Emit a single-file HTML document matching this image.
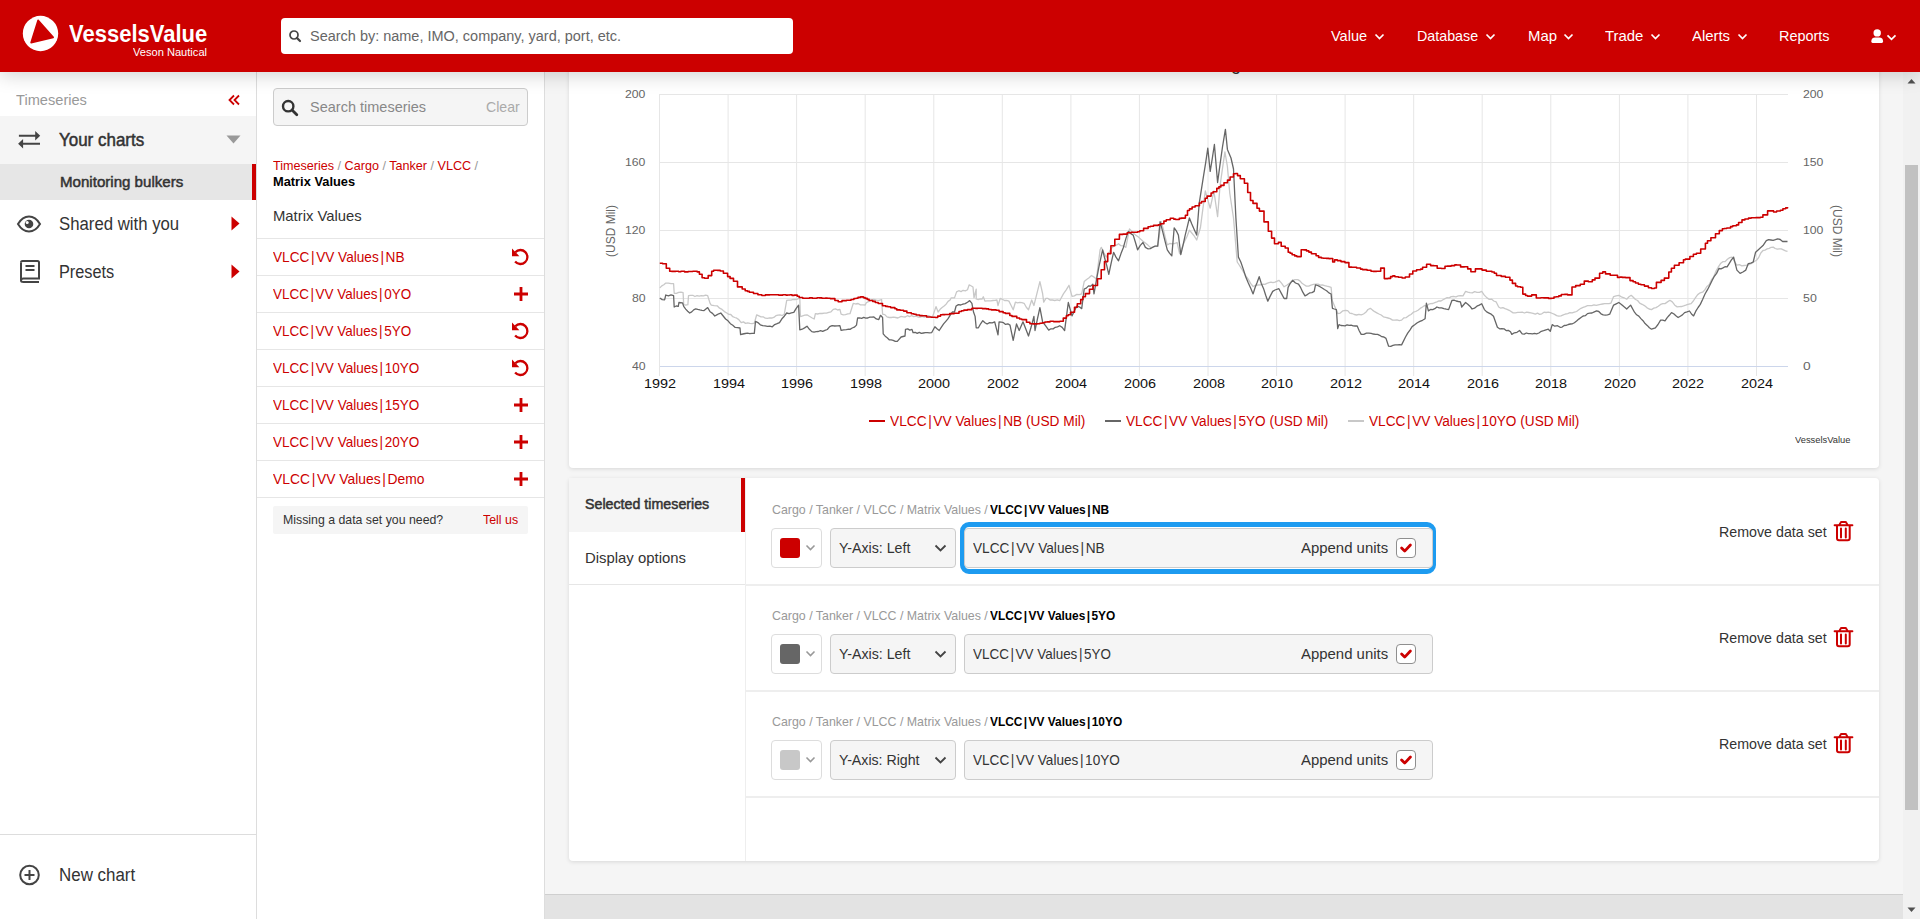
<!DOCTYPE html>
<html><head><meta charset="utf-8"><title>VesselsValue Timeseries</title>
<style>
html,body{margin:0;padding:0;width:1920px;height:919px;overflow:hidden;background:#fff;font-family:"Liberation Sans", sans-serif;}
.t{position:absolute;line-height:1;white-space:nowrap;transform-origin:0 50%;}
.r{position:absolute;}
</style></head><body>
<div class="r" style="left:545px;top:72px;width:1375px;height:847px;background:#f5f5f5"></div>
<div class="r" style="left:0px;top:72px;width:256px;height:847px;background:#fff;border-right:1px solid #ddd"></div>
<div class="r" style="left:257px;top:72px;width:287px;height:847px;background:#fff;border-right:1px solid #ddd"></div>
<div class="r" style="left:545px;top:894px;width:1358px;height:25px;background:#e3e3e3;border-top:1px solid #cfcfcf;box-sizing:border-box"></div>
<div class="r" style="left:1903px;top:72px;width:17px;height:847px;background:#f1f1f1"></div>
<div class="r" style="left:1905px;top:165px;width:13px;height:645px;background:#c1c1c1"></div>
<svg class="r" style="left:1903px;top:72px" width="17" height="847"><path d="M4.5 11.5 L8.5 7 L12.5 11.5Z" fill="#505050"/><path d="M4.5 835.5 L8.5 840 L12.5 835.5Z" fill="#505050"/></svg>
<div id="sb_ts" class="t" style="left:16.0px;top:93.1px;font-size:14px;color:#999;font-weight:400;transform:scaleX(1.0441);">Timeseries</div>
<svg class="r" style="left:226px;top:92px" width="16" height="16" viewBox="0 0 16 16"><path d="M8 3.5 L3.5 8 L8 12.5 M13 3.5 L8.5 8 L13 12.5" stroke="#cc0000" stroke-width="1.8" fill="none"/></svg>
<div class="r" style="left:0px;top:116px;width:256px;height:48px;background:#f5f5f5"></div>
<svg class="r" style="left:17px;top:129px" width="26" height="22" viewBox="0 0 26 22"><path d="M1.9 6.7 H19.5 M4.5 14.7 H23" stroke="#444" stroke-width="1.9"/><path d="M23.2 6.7 L18.2 1.9 V11.5Z M1.1 14.7 L6.1 9.9 V19.5Z" fill="#444"/></svg>
<div id="sb_yc" class="t" style="left:59.4px;top:130.8px;font-size:18px;color:#333;font-weight:400;-webkit-text-stroke:0.5px currentColor;transform:scaleX(0.9422);">Your charts</div>
<svg class="r" style="left:226px;top:135px" width="15" height="9"><path d="M0.5 0.5 H14.5 L7.5 8.5Z" fill="#999"/></svg>
<div class="r" style="left:0px;top:164px;width:256px;height:36px;background:#e6e6e6"></div>
<div class="r" style="left:252px;top:164px;width:4px;height:36px;background:#cc0000"></div>
<div id="sb_mb" class="t" style="left:60.0px;top:174.3px;font-size:15px;color:#333;font-weight:400;-webkit-text-stroke:0.5px currentColor;transform:scaleX(1.0057);">Monitoring bulkers</div>
<svg class="r" style="left:16px;top:215px" width="27" height="18" viewBox="0 0 27 18"><path d="M2 9 C5.2 3.6 8.8 1.5 13 1.5 C17.2 1.5 20.8 3.6 24 9 C20.8 14.4 17.2 16.5 13 16.5 C8.8 16.5 5.2 14.4 2 9Z" stroke="#444" stroke-width="2" fill="none"/><circle cx="13" cy="9" r="4.3" fill="#444"/><circle cx="11.2" cy="7.4" r="1.5" fill="#fff"/></svg>
<div id="sb_sw" class="t" style="left:59.4px;top:215.5px;font-size:17.6px;color:#333;font-weight:400;transform:scaleX(0.9524);">Shared with you</div>
<svg class="r" style="left:231px;top:216px" width="9" height="15"><path d="M0.5 0.5 L8.5 7.5 L0.5 14.5Z" fill="#cc0000"/></svg>
<svg class="r" style="left:18px;top:259px" width="24" height="25" viewBox="0 0 24 25"><path d="M3 3.5 Q3 2 4.5 2 H19.5 Q21 2 21 3.5 V19.5 H5.5 Q3 19.5 3 21.5 Q3 23 5.5 23 H21" stroke="#444" stroke-width="2" fill="none"/><path d="M3 3.5 V21.5" stroke="#444" stroke-width="2"/><path d="M7.5 7 H16.5 M7.5 11 H16.5" stroke="#444" stroke-width="2"/></svg>
<div id="sb_pr" class="t" style="left:59.4px;top:263.9px;font-size:17.6px;color:#333;font-weight:400;transform:scaleX(0.9267);">Presets</div>
<svg class="r" style="left:231px;top:264px" width="9" height="15"><path d="M0.5 0.5 L8.5 7.5 L0.5 14.5Z" fill="#cc0000"/></svg>
<div class="r" style="left:0px;top:834px;width:256px;height:1px;background:#ddd"></div>
<svg class="r" style="left:18px;top:864px" width="23" height="22" viewBox="0 0 23 22"><circle cx="11.5" cy="11" r="9.3" stroke="#444" stroke-width="2" fill="none"/><path d="M11.5 6 V16 M6.5 11 H16.5" stroke="#444" stroke-width="2"/></svg>
<div id="sb_nc" class="t" style="left:59.4px;top:866.7px;font-size:17.6px;color:#333;font-weight:400;transform:scaleX(0.9620);">New chart</div>
<div class="r" style="left:273px;top:88px;width:255px;height:38px;background:#f5f5f5;border:1px solid #ccc;border-radius:4px;box-sizing:border-box"></div>
<svg class="r" style="left:281px;top:99px" width="18" height="18" viewBox="0 0 18 18"><circle cx="7.2" cy="7.2" r="5.2" stroke="#333" stroke-width="2.4" fill="none"/><path d="M11 11 L15.8 15.8" stroke="#333" stroke-width="2.8" stroke-linecap="round"/></svg>
<div id="m_st" class="t" style="left:310.4px;top:99.8px;font-size:14.4px;color:#888;font-weight:400;transform:scaleX(1.0078);">Search timeseries</div>
<div id="m_cl" class="t" style="left:485.6px;top:99.8px;font-size:14.4px;color:#aaa;font-weight:400;transform:scaleX(0.9824);">Clear</div>
<div id="m_bc" class="t" style="left:273.4px;top:159.7px;font-size:12.2px;color:#cc0000;font-weight:400;transform:scaleX(1.0332);">Timeseries <span style="color:#999">/</span> Cargo <span style="color:#999">/</span> Tanker <span style="color:#999">/</span> VLCC <span style="color:#999">/</span></div>
<div id="m_mvb" class="t" style="left:273.4px;top:176.3px;font-size:12.6px;color:#000;font-weight:700;transform:scaleX(1.0198);">Matrix Values</div>
<div id="m_mv" class="t" style="left:273.4px;top:208.5px;font-size:14.4px;color:#333;font-weight:400;transform:scaleX(1.0302);">Matrix Values</div>
<div class="r" style="left:257px;top:238px;width:287px;height:1px;background:#e6e6e6"></div>
<div id="m_it0" class="t" style="left:273.4px;top:249.8px;font-size:14.4px;color:#cc0000;font-weight:400;transform:scaleX(0.9468);">VLCC<span style="margin:0 0.12em">|</span>VV Values<span style="margin:0 0.12em">|</span>NB</div>
<div class="r" style="left:257px;top:275px;width:287px;height:1px;background:#e6e6e6"></div>
<svg class="r" style="left:510px;top:247px" width="20" height="20" viewBox="0 0 20 20"><path d="M5.3 5.2 A7 7 0 1 1 5.1 14.6" stroke="#cc0000" stroke-width="2.3" fill="none"/><path d="M2 1.6 V9.2 H9.4Z" fill="#cc0000"/></svg>
<div id="m_it1" class="t" style="left:273.4px;top:286.8px;font-size:14.4px;color:#cc0000;font-weight:400;transform:scaleX(0.9351);">VLCC<span style="margin:0 0.12em">|</span>VV Values<span style="margin:0 0.12em">|</span>0YO</div>
<div class="r" style="left:257px;top:312px;width:287px;height:1px;background:#e6e6e6"></div>
<svg class="r" style="left:514px;top:287px" width="14" height="14" viewBox="0 0 14 14"><path d="M7 0 V14 M0 7 H14" stroke="#cc0000" stroke-width="2.8"/></svg>
<div id="m_it2" class="t" style="left:273.4px;top:323.8px;font-size:14.4px;color:#cc0000;font-weight:400;transform:scaleX(0.9351);">VLCC<span style="margin:0 0.12em">|</span>VV Values<span style="margin:0 0.12em">|</span>5YO</div>
<div class="r" style="left:257px;top:349px;width:287px;height:1px;background:#e6e6e6"></div>
<svg class="r" style="left:510px;top:321px" width="20" height="20" viewBox="0 0 20 20"><path d="M5.3 5.2 A7 7 0 1 1 5.1 14.6" stroke="#cc0000" stroke-width="2.3" fill="none"/><path d="M2 1.6 V9.2 H9.4Z" fill="#cc0000"/></svg>
<div id="m_it3" class="t" style="left:273.4px;top:360.8px;font-size:14.4px;color:#cc0000;font-weight:400;transform:scaleX(0.9397);">VLCC<span style="margin:0 0.12em">|</span>VV Values<span style="margin:0 0.12em">|</span>10YO</div>
<div class="r" style="left:257px;top:386px;width:287px;height:1px;background:#e6e6e6"></div>
<svg class="r" style="left:510px;top:358px" width="20" height="20" viewBox="0 0 20 20"><path d="M5.3 5.2 A7 7 0 1 1 5.1 14.6" stroke="#cc0000" stroke-width="2.3" fill="none"/><path d="M2 1.6 V9.2 H9.4Z" fill="#cc0000"/></svg>
<div id="m_it4" class="t" style="left:273.4px;top:397.8px;font-size:14.4px;color:#cc0000;font-weight:400;transform:scaleX(0.9397);">VLCC<span style="margin:0 0.12em">|</span>VV Values<span style="margin:0 0.12em">|</span>15YO</div>
<div class="r" style="left:257px;top:423px;width:287px;height:1px;background:#e6e6e6"></div>
<svg class="r" style="left:514px;top:398px" width="14" height="14" viewBox="0 0 14 14"><path d="M7 0 V14 M0 7 H14" stroke="#cc0000" stroke-width="2.8"/></svg>
<div id="m_it5" class="t" style="left:273.4px;top:434.8px;font-size:14.4px;color:#cc0000;font-weight:400;transform:scaleX(0.9397);">VLCC<span style="margin:0 0.12em">|</span>VV Values<span style="margin:0 0.12em">|</span>20YO</div>
<div class="r" style="left:257px;top:460px;width:287px;height:1px;background:#e6e6e6"></div>
<svg class="r" style="left:514px;top:435px" width="14" height="14" viewBox="0 0 14 14"><path d="M7 0 V14 M0 7 H14" stroke="#cc0000" stroke-width="2.8"/></svg>
<div id="m_it6" class="t" style="left:273.4px;top:471.8px;font-size:14.4px;color:#cc0000;font-weight:400;transform:scaleX(0.9631);">VLCC<span style="margin:0 0.12em">|</span>VV Values<span style="margin:0 0.12em">|</span>Demo</div>
<div class="r" style="left:257px;top:497px;width:287px;height:1px;background:#e6e6e6"></div>
<svg class="r" style="left:514px;top:472px" width="14" height="14" viewBox="0 0 14 14"><path d="M7 0 V14 M0 7 H14" stroke="#cc0000" stroke-width="2.8"/></svg>
<div class="r" style="left:273px;top:506px;width:255px;height:28px;background:#f5f5f5;border-radius:2px"></div>
<div id="m_ms" class="t" style="left:283.4px;top:513.7px;font-size:12.6px;color:#333;font-weight:400;transform:scaleX(0.9780);">Missing a data set you need?</div>
<div id="m_tu" class="t" style="left:483.0px;top:513.7px;font-size:12.6px;color:#cc0000;font-weight:400;transform:scaleX(0.9833);">Tell us</div>
<div class="r" style="left:569px;top:50px;width:1310px;height:418px;background:#fff;border-radius:4px;box-shadow:0 1px 4px rgba(0,0,0,.12)"></div>
<div class="t" style="left:1231px;top:55.4px;font-size:18px;color:#333">g</div>
<svg class="r" style="left:545px;top:72px" width="1358" height="400" viewBox="545 72 1358 400">
<path d="M660 94.5 H1788" stroke="#e6e6e6" stroke-width="1"/>
<path d="M660 162.5 H1788" stroke="#e6e6e6" stroke-width="1"/>
<path d="M660 230.5 H1788" stroke="#e6e6e6" stroke-width="1"/>
<path d="M660 298.5 H1788" stroke="#e6e6e6" stroke-width="1"/>
<path d="M659.5 94 V376" stroke="#e6e6e6" stroke-width="1"/>
<path d="M728.1 94 V376" stroke="#e6e6e6" stroke-width="1"/>
<path d="M796.6 94 V376" stroke="#e6e6e6" stroke-width="1"/>
<path d="M865.2 94 V376" stroke="#e6e6e6" stroke-width="1"/>
<path d="M933.8 94 V376" stroke="#e6e6e6" stroke-width="1"/>
<path d="M1002.3 94 V376" stroke="#e6e6e6" stroke-width="1"/>
<path d="M1070.9 94 V376" stroke="#e6e6e6" stroke-width="1"/>
<path d="M1139.4 94 V376" stroke="#e6e6e6" stroke-width="1"/>
<path d="M1208.0 94 V376" stroke="#e6e6e6" stroke-width="1"/>
<path d="M1276.6 94 V376" stroke="#e6e6e6" stroke-width="1"/>
<path d="M1345.1 94 V376" stroke="#e6e6e6" stroke-width="1"/>
<path d="M1413.7 94 V376" stroke="#e6e6e6" stroke-width="1"/>
<path d="M1482.2 94 V376" stroke="#e6e6e6" stroke-width="1"/>
<path d="M1550.8 94 V376" stroke="#e6e6e6" stroke-width="1"/>
<path d="M1619.4 94 V376" stroke="#e6e6e6" stroke-width="1"/>
<path d="M1687.9 94 V376" stroke="#e6e6e6" stroke-width="1"/>
<path d="M1756.5 94 V376" stroke="#e6e6e6" stroke-width="1"/>
<path d="M660 366.5 H1788" stroke="#ccd6eb" stroke-width="1"/>
<path d="M659.8 287.9 L661.8 285.9 L663.8 284.8 L665.8 283.1 L668.4 283.1 L671.0 283.7 L673.6 283.7 L674.2 293.3 L676.4 293.4 L678.7 292.3 L680.9 292.1 L683.1 292.7 L683.7 304.6 L685.8 305.1 L687.9 304.6 L688.5 295.7 L690.6 295.3 L692.8 295.3 L694.9 296.5 L697.0 295.7 L699.2 296.2 L701.3 295.7 L703.4 295.9 L705.6 295.1 L707.7 295.7 L710.1 303.4 L711.3 305.2 L714.2 305.7 L717.2 305.8 L719.6 308.2 L722.0 309.4 L724.4 311.6 L726.8 313.0 L728.8 314.4 L730.8 314.5 L732.8 316.7 L734.8 317.5 L736.8 318.2 L738.8 319.6 L741.2 322.6 L743.4 321.9 L745.6 323.4 L747.8 322.9 L749.9 323.4 L752.1 323.7 L754.3 323.2 L756.7 314.8 L758.9 315.9 L761.0 316.9 L763.2 316.8 L765.3 318.2 L767.5 318.4 L769.6 317.8 L771.7 318.0 L773.8 317.4 L775.9 315.7 L778.0 315.2 L780.1 314.8 L782.2 315.5 L784.3 314.2 L786.7 300.4 L788.8 300.1 L791.0 300.1 L793.1 299.4 L795.3 299.5 L797.4 299.2 L799.8 298.0 L800.4 316.6 L802.6 315.8 L804.8 315.2 L807.0 314.8 L809.4 316.3 L811.8 317.7 L814.2 319.0 L815.4 313.6 L817.6 314.0 L819.9 313.4 L822.1 313.5 L824.3 313.1 L826.5 313.1 L828.8 312.3 L831.0 311.8 L833.3 309.4 L835.5 308.9 L837.7 310.0 L839.9 309.4 L841.1 314.2 L843.3 314.8 L845.5 314.6 L847.8 313.9 L850.0 313.7 L853.3 303.3 L855.7 304.0 L858.1 303.5 L860.4 304.9 L862.8 304.8 L865.2 305.0 L866.3 302.8 L868.8 301.4 L871.4 299.9 L873.9 299.5 L876.5 300.1 L879.0 300.3 L881.6 299.5 L882.6 314.2 L884.8 314.6 L887.0 316.9 L889.2 317.5 L891.4 317.5 L893.5 317.2 L895.7 317.5 L897.9 318.0 L901.1 316.4 L903.2 316.8 L905.3 317.0 L907.4 315.7 L909.5 316.6 L911.6 315.7 L913.7 316.7 L915.8 316.1 L918.0 317.0 L920.1 317.2 L922.2 316.4 L924.3 317.2 L926.4 316.1 L928.5 315.7 L930.6 316.6 L932.7 316.4 L936.0 306.6 L938.1 312.0 L940.1 309.3 L942.1 307.5 L944.1 305.9 L946.1 304.2 L948.1 301.4 L950.1 300.0 L951.2 297.9 L954.5 297.9 L956.6 291.9 L958.8 290.7 L961.0 291.6 L963.1 290.3 L965.3 290.9 L967.5 289.7 L969.2 284.8 L973.0 287.0 L974.0 297.9 L976.2 289.2 L976.2 299.0 L978.2 299.6 L980.2 298.8 L982.2 299.0 L983.3 296.8 L984.9 301.1 L986.9 300.9 L988.9 300.8 L990.9 300.8 L992.9 300.5 L994.9 300.3 L996.9 300.0 L998.0 305.5 L1000.2 298.4 L1002.4 299.3 L1004.5 300.5 L1006.7 300.4 L1008.9 301.1 L1011.0 305.3 L1013.2 309.8 L1015.4 302.2 L1017.6 302.8 L1019.8 302.3 L1021.9 302.7 L1024.1 303.3 L1026.3 307.3 L1028.5 309.8 L1031.7 300.0 L1033.9 305.5 L1035.9 297.6 L1037.9 289.6 L1039.9 281.6 L1042.6 293.5 L1043.7 302.2 L1045.9 298.4 L1048.0 298.4 L1050.0 300.0 L1052.4 300.0 L1054.8 300.5 L1057.3 299.8 L1059.7 300.7 L1063.4 293.9 L1066.2 289.8 L1069.0 285.3 L1072.0 296.3 L1074.4 295.9 L1076.8 294.4 L1079.3 294.7 L1081.7 293.9 L1084.2 281.6 L1086.6 279.5 L1089.1 277.8 L1091.5 275.5 L1094.0 277.1 L1096.4 279.2 L1100.1 249.8 L1101.3 247.4 L1103.8 252.6 L1106.2 257.1 L1108.2 254.2 L1110.3 249.9 L1112.3 247.4 L1114.4 245.5 L1116.4 245.2 L1118.5 243.7 L1120.9 245.7 L1123.4 245.8 L1125.8 247.4 L1129.5 229.0 L1131.5 231.0 L1133.6 233.2 L1135.6 235.1 L1138.1 236.8 L1140.5 238.9 L1143.0 241.2 L1145.4 243.0 L1147.9 245.1 L1150.3 247.4 L1152.8 247.1 L1155.2 246.2 L1157.7 246.1 L1161.3 221.6 L1163.3 229.2 L1165.3 237.6 L1167.3 244.9 L1169.8 243.5 L1172.2 243.8 L1174.6 243.5 L1177.1 242.5 L1179.6 253.5 L1182.0 247.4 L1184.5 241.4 L1187.0 236.5 L1189.4 230.2 L1191.8 233.0 L1194.3 236.2 L1196.7 240.0 L1200.4 227.8 L1202.8 209.3 L1205.3 191.0 L1207.8 199.9 L1210.2 208.2 L1213.9 191.0 L1217.6 216.7 L1220.0 186.1 L1222.5 168.3 L1224.9 151.8 L1227.4 166.5 L1229.8 193.5 L1233.5 218.0 L1237.2 262.0 L1239.2 265.0 L1241.3 268.3 L1243.3 271.8 L1245.8 276.0 L1248.2 279.1 L1250.6 283.4 L1253.1 286.5 L1255.5 285.4 L1258.0 285.0 L1260.5 284.9 L1262.9 284.1 L1264.9 284.4 L1266.9 283.4 L1269.0 282.7 L1271.0 282.2 L1273.0 282.6 L1275.0 282.2 L1278.9 280.3 L1281.5 283.1 L1284.1 286.8 L1286.7 285.3 L1289.4 283.4 L1292.0 280.9 L1294.9 279.7 L1297.8 279.6 L1299.9 280.9 L1302.0 283.3 L1304.2 284.7 L1306.3 286.1 L1308.7 286.2 L1311.0 285.1 L1313.4 284.4 L1315.7 284.2 L1318.1 284.2 L1320.3 285.2 L1322.4 284.9 L1324.6 285.6 L1326.8 286.2 L1328.9 286.7 L1331.1 287.4 L1332.4 301.1 L1335.1 307.2 L1337.7 313.5 L1340.3 313.1 L1342.9 310.8 L1345.5 310.3 L1347.7 310.6 L1349.8 313.1 L1352.0 313.5 L1354.3 314.5 L1356.6 315.0 L1358.9 314.4 L1361.2 314.9 L1363.5 314.0 L1365.8 312.3 L1368.0 309.5 L1370.3 308.3 L1372.5 310.1 L1374.7 311.7 L1376.8 312.8 L1379.0 314.0 L1381.2 315.0 L1383.4 316.8 L1385.7 317.4 L1388.0 318.0 L1390.2 318.6 L1392.5 320.1 L1394.8 320.2 L1397.0 319.8 L1399.3 320.6 L1401.6 320.1 L1404.0 317.8 L1406.3 317.6 L1408.7 315.7 L1411.0 314.5 L1413.4 312.2 L1415.7 311.5 L1418.0 310.2 L1420.2 308.4 L1422.5 307.0 L1424.6 305.5 L1426.6 305.9 L1428.7 304.2 L1430.7 303.7 L1432.8 303.5 L1434.8 302.6 L1436.9 301.8 L1438.9 300.9 L1441.0 301.0 L1443.0 299.8 L1445.1 298.6 L1447.1 297.7 L1449.2 297.9 L1451.2 296.6 L1453.6 296.4 L1455.9 296.8 L1458.3 295.9 L1460.6 295.6 L1463.0 295.9 L1465.6 291.4 L1467.8 292.1 L1470.0 292.7 L1472.3 292.9 L1474.7 291.7 L1477.0 292.4 L1479.4 292.3 L1481.7 291.4 L1484.3 295.1 L1487.0 297.9 L1489.3 299.4 L1491.5 299.1 L1493.8 301.0 L1496.1 301.8 L1498.7 307.0 L1500.8 308.2 L1502.9 307.6 L1505.0 308.6 L1507.1 309.3 L1509.2 310.3 L1513.1 312.9 L1515.4 312.8 L1517.7 312.4 L1519.9 312.3 L1522.2 312.2 L1524.4 313.0 L1526.6 312.1 L1528.8 312.5 L1530.9 312.9 L1533.1 313.3 L1535.3 314.2 L1537.5 313.2 L1539.6 314.3 L1541.8 313.8 L1544.0 312.2 L1546.1 312.5 L1548.3 312.2 L1550.4 312.7 L1552.5 313.5 L1554.6 314.4 L1556.7 315.6 L1558.8 316.2 L1561.0 315.8 L1563.3 314.8 L1565.5 314.0 L1567.7 313.6 L1569.9 312.7 L1572.2 312.9 L1574.4 312.2 L1576.6 311.5 L1578.8 309.8 L1581.0 308.3 L1583.1 307.4 L1585.3 306.6 L1587.5 305.7 L1589.7 305.7 L1591.8 305.7 L1594.0 304.9 L1596.2 305.3 L1598.3 304.8 L1600.5 304.4 L1602.6 304.0 L1604.7 303.7 L1606.8 303.6 L1608.9 303.7 L1611.0 303.1 L1613.6 296.6 L1616.2 295.8 L1618.8 295.3 L1621.4 296.9 L1624.1 297.8 L1626.7 299.2 L1629.0 296.8 L1631.2 295.3 L1633.3 297.3 L1635.5 299.5 L1637.6 300.5 L1639.7 303.1 L1642.1 304.3 L1644.4 305.6 L1646.8 307.6 L1649.1 309.0 L1651.5 309.6 L1653.8 308.1 L1656.0 307.6 L1658.3 306.2 L1660.6 304.4 L1662.8 303.6 L1665.0 303.6 L1667.5 301.9 L1669.9 300.3 L1672.3 301.9 L1674.8 305.2 L1677.2 306.9 L1679.3 306.7 L1681.5 306.5 L1683.6 305.9 L1685.8 305.2 L1687.9 304.4 L1691.1 303.6 L1693.3 301.0 L1695.5 297.7 L1697.7 294.6 L1700.2 292.8 L1702.6 292.2 L1704.8 289.9 L1706.9 286.5 L1709.1 284.8 L1711.4 280.0 L1713.7 276.8 L1715.9 271.4 L1718.2 267.2 L1720.5 263.6 L1722.8 261.7 L1725.1 261.6 L1727.4 259.2 L1729.7 257.6 L1732.0 257.1 L1734.5 261.7 L1736.9 265.2 L1739.4 264.6 L1741.8 265.8 L1744.2 265.5 L1746.7 265.2 L1749.2 264.5 L1751.6 263.5 L1754.0 261.7 L1756.5 260.3 L1758.7 257.5 L1760.8 253.0 L1763.0 250.5 L1765.0 250.1 L1767.1 248.9 L1769.2 248.4 L1771.2 247.3 L1773.2 247.1 L1775.2 248.5 L1777.3 249.2 L1779.3 248.9 L1781.3 248.8 L1783.4 249.8 L1785.5 250.8 L1787.5 251.3" stroke="#c8c8c8" stroke-width="1.3" fill="none" stroke-linejoin="round"/>
<path d="M659.8 298.0 L662.2 299.6 L664.6 299.8 L665.8 295.0 L668.4 295.9 L671.0 294.8 L673.6 295.7 L674.2 307.0 L676.2 306.0 L678.3 306.4 L678.9 302.5 L682.5 302.8 L683.7 306.4 L685.7 309.1 L687.7 311.2 L689.7 313.0 L691.7 311.9 L693.7 309.9 L695.7 308.8 L697.8 309.4 L699.9 309.9 L702.0 310.3 L704.1 310.6 L707.7 307.6 L710.1 311.8 L712.5 313.4 L714.8 316.0 L716.8 314.9 L718.8 313.8 L720.8 313.0 L723.2 316.0 L725.6 319.0 L728.0 320.8 L730.4 323.7 L732.8 325.3 L735.2 327.4 L737.6 327.6 L740.0 328.0 L740.6 334.6 L742.9 334.0 L745.2 333.5 L747.5 333.2 L749.7 333.7 L752.0 333.3 L754.3 333.4 L755.5 321.4 L757.9 322.6 L760.3 324.8 L762.7 325.6 L765.1 325.9 L767.5 326.3 L769.9 326.1 L772.3 326.8 L774.7 324.6 L777.1 323.7 L779.5 322.6 L781.9 318.8 L784.3 316.2 L786.7 313.0 L789.1 313.6 L791.4 312.9 L793.8 312.4 L796.2 308.3 L798.6 305.2 L799.8 329.8 L802.2 329.2 L804.6 327.9 L807.0 326.2 L809.4 329.3 L811.8 331.6 L814.0 332.1 L816.2 331.6 L818.3 331.5 L820.5 330.6 L822.7 331.4 L824.9 330.4 L827.3 329.5 L829.7 326.7 L832.1 325.6 L834.7 326.0 L837.3 325.9 L839.9 325.6 L841.1 330.4 L843.7 329.9 L846.3 329.6 L848.9 329.2 L850.0 329.4 L852.2 328.0 L854.3 327.2 L856.5 325.1 L857.6 318.0 L859.6 317.9 L861.7 318.3 L863.7 317.4 L865.8 318.1 L867.8 318.0 L869.8 317.1 L871.9 317.1 L873.9 316.9 L876.3 318.9 L878.8 319.6 L880.5 315.3 L882.6 317.5 L883.2 333.8 L885.2 336.2 L887.2 337.8 L889.2 339.8 L891.2 339.8 L893.2 340.3 L895.3 341.3 L897.3 341.4 L901.1 337.0 L905.0 336.0 L905.5 329.4 L907.7 328.9 L909.8 330.1 L912.0 329.4 L913.1 332.7 L915.2 332.3 L917.2 333.4 L919.3 332.4 L921.3 333.4 L923.4 333.0 L925.4 332.7 L927.5 332.7 L929.5 332.9 L931.6 332.7 L934.9 326.7 L937.0 328.7 L939.2 330.5 L941.4 327.1 L943.6 323.9 L945.8 321.3 L947.9 318.9 L950.1 315.3 L952.3 312.0 L954.5 312.0 L956.1 306.0 L958.4 304.6 L960.7 305.0 L962.9 304.1 L965.2 303.6 L967.5 302.2 L969.7 300.6 L971.9 303.3 L973.5 312.0 L975.1 316.4 L976.2 327.8 L978.4 327.8 L980.6 323.8 L982.8 320.7 L985.0 322.7 L987.1 324.0 L989.6 322.6 L992.2 322.8 L994.7 321.8 L998.0 334.9 L999.1 321.8 L1001.3 322.1 L1003.5 322.7 L1005.6 324.4 L1007.8 323.8 L1010.0 325.1 L1013.2 340.3 L1016.5 324.0 L1019.2 330.5 L1023.0 321.8 L1025.8 328.9 L1028.5 336.0 L1031.2 326.8 L1033.9 316.4 L1035.0 330.5 L1037.5 318.7 L1039.9 307.7 L1042.6 321.8 L1045.9 326.2 L1048.7 330.1 L1050.9 328.8 L1053.1 328.9 L1055.3 327.3 L1057.5 326.9 L1059.7 325.7 L1062.2 327.4 L1064.6 330.6 L1068.3 302.5 L1072.0 315.9 L1074.4 310.8 L1076.8 306.1 L1079.2 306.8 L1081.7 308.6 L1084.2 289.0 L1086.3 288.1 L1088.5 285.9 L1090.7 286.1 L1092.8 284.1 L1094.0 293.9 L1096.5 279.6 L1098.9 266.9 L1102.6 249.8 L1104.7 258.3 L1106.7 265.4 L1108.8 274.3 L1111.2 262.9 L1113.6 252.3 L1116.0 257.1 L1118.5 260.8 L1121.0 253.6 L1123.4 247.4 L1125.8 238.9 L1128.3 231.4 L1130.8 233.6 L1133.2 235.1 L1135.4 242.3 L1137.6 249.8 L1140.3 245.4 L1143.0 242.5 L1145.4 247.4 L1147.8 248.8 L1150.3 248.6 L1152.8 247.2 L1155.2 246.2 L1157.7 246.1 L1160.1 221.6 L1162.5 230.8 L1164.9 240.6 L1167.3 249.8 L1169.5 253.2 L1171.8 255.9 L1174.2 227.8 L1176.3 230.8 L1178.4 235.1 L1180.8 254.7 L1183.0 245.3 L1185.1 235.6 L1187.2 227.1 L1189.4 218.0 L1191.8 224.1 L1194.3 229.8 L1196.7 235.1 L1199.2 203.3 L1201.3 190.2 L1203.5 176.2 L1205.7 162.6 L1207.8 148.2 L1210.2 171.4 L1212.3 158.3 L1214.4 144.5 L1217.6 182.5 L1220.0 164.7 L1222.5 146.9 L1225.4 129.3 L1227.4 149.4 L1231.0 158.0 L1233.5 169.0 L1235.9 218.0 L1238.4 257.1 L1240.8 262.0 L1243.2 268.9 L1245.7 276.7 L1248.2 282.7 L1250.6 287.9 L1253.1 293.9 L1255.1 287.5 L1257.2 282.3 L1259.2 276.7 L1261.3 283.4 L1263.5 288.4 L1265.7 295.2 L1267.8 301.2 L1270.2 296.1 L1272.7 291.4 L1275.0 290.0 L1278.9 288.7 L1281.5 293.6 L1284.1 298.5 L1286.7 298.5 L1288.1 287.4 L1290.3 283.3 L1292.6 280.3 L1295.5 283.0 L1298.5 284.2 L1300.7 287.7 L1302.8 292.2 L1305.0 295.9 L1307.3 294.6 L1309.6 292.9 L1311.9 292.6 L1314.2 291.4 L1315.5 284.8 L1317.7 285.5 L1320.0 286.7 L1322.2 288.0 L1324.4 289.5 L1326.6 290.7 L1328.9 292.9 L1331.1 294.0 L1332.4 308.3 L1334.4 309.0 L1336.4 309.6 L1337.7 328.6 L1339.0 324.6 L1341.0 325.5 L1343.0 325.6 L1345.1 325.9 L1347.1 324.8 L1349.1 325.3 L1351.1 325.1 L1353.2 325.8 L1355.2 326.0 L1357.2 326.0 L1359.2 330.7 L1361.2 334.4 L1363.8 334.3 L1366.4 333.1 L1369.0 333.1 L1371.2 333.4 L1373.3 334.0 L1375.5 334.4 L1377.6 334.4 L1379.7 335.3 L1381.8 336.7 L1383.9 337.0 L1386.0 338.4 L1388.6 346.2 L1390.8 346.3 L1392.9 345.4 L1395.1 344.9 L1397.3 344.8 L1399.4 344.7 L1401.6 344.9 L1405.5 337.0 L1407.7 333.1 L1409.9 330.1 L1412.1 326.6 L1414.7 324.8 L1417.3 322.8 L1419.9 321.4 L1422.5 320.3 L1425.1 318.8 L1426.4 303.1 L1428.4 310.9 L1430.5 309.5 L1432.7 309.6 L1434.8 308.7 L1436.9 307.0 L1439.2 307.9 L1441.6 307.9 L1443.9 308.6 L1446.3 309.2 L1448.6 309.6 L1451.9 300.5 L1454.0 300.1 L1456.2 301.0 L1458.3 301.5 L1460.4 301.8 L1461.7 307.0 L1465.6 302.5 L1467.8 304.2 L1469.9 306.2 L1472.1 309.0 L1474.5 308.2 L1476.9 306.2 L1479.3 305.1 L1481.7 303.8 L1484.4 309.6 L1486.7 311.9 L1489.0 313.1 L1491.2 314.2 L1493.5 316.2 L1497.4 327.3 L1499.6 328.8 L1501.8 328.6 L1504.0 328.8 L1506.1 330.6 L1508.3 330.4 L1510.5 331.8 L1511.8 334.4 L1514.4 332.8 L1517.0 332.3 L1519.6 330.5 L1522.2 333.8 L1524.3 334.1 L1526.3 333.0 L1528.4 333.7 L1530.4 333.7 L1532.5 333.8 L1534.5 333.3 L1536.6 333.8 L1538.9 333.0 L1541.3 331.3 L1543.6 330.7 L1546.0 329.9 L1548.3 329.2 L1550.3 331.2 L1552.2 324.6 L1554.8 326.2 L1557.5 325.7 L1560.1 327.3 L1562.1 327.1 L1564.2 325.5 L1566.2 325.4 L1568.3 324.5 L1570.3 324.0 L1572.4 323.8 L1574.4 322.7 L1576.6 321.0 L1578.8 319.1 L1581.0 317.5 L1583.1 316.0 L1585.3 315.7 L1587.5 313.6 L1589.8 313.2 L1592.0 313.0 L1594.3 311.9 L1596.6 310.9 L1598.8 311.5 L1601.0 313.8 L1603.2 314.9 L1605.4 315.1 L1607.5 314.8 L1609.7 314.2 L1613.6 305.1 L1616.2 303.8 L1618.8 302.5 L1621.4 304.4 L1624.1 306.8 L1626.7 309.0 L1630.6 305.1 L1634.5 312.2 L1636.6 314.8 L1638.8 316.1 L1640.9 318.6 L1643.0 320.7 L1645.1 323.6 L1647.2 325.4 L1649.4 327.8 L1651.5 329.2 L1655.4 327.9 L1658.0 324.5 L1660.6 320.1 L1662.8 320.1 L1665.0 320.8 L1667.2 317.6 L1669.3 315.3 L1671.5 312.6 L1673.7 313.8 L1675.9 315.8 L1678.1 317.5 L1680.3 316.2 L1682.4 314.9 L1684.6 312.6 L1687.0 311.9 L1689.5 311.0 L1691.5 314.0 L1693.6 315.9 L1695.8 311.2 L1698.1 307.5 L1700.3 304.4 L1702.6 299.5 L1705.0 294.0 L1707.5 289.7 L1709.8 285.3 L1712.1 280.5 L1714.3 276.3 L1716.6 273.4 L1718.9 268.5 L1721.0 268.9 L1723.0 267.9 L1725.0 266.7 L1727.1 266.9 L1729.3 263.3 L1731.4 259.9 L1733.6 257.1 L1736.9 270.1 L1740.1 273.4 L1742.9 272.0 L1745.8 270.1 L1748.3 263.6 L1750.8 263.1 L1753.2 262.0 L1755.6 252.2 L1758.1 249.9 L1760.5 247.8 L1763.0 245.6 L1766.3 240.7 L1768.6 239.7 L1770.9 240.0 L1773.1 240.3 L1775.4 239.6 L1777.7 238.8 L1780.2 239.5 L1782.6 241.5 L1785.0 241.5 L1787.5 241.5" stroke="#666" stroke-width="1.3" fill="none" stroke-linejoin="round"/>
<path d="M659.8 263.3 L662.6 263.3 L662.6 263.7 L666.3 263.7 L666.3 268.2 L669.7 268.2 L669.7 271.3 L671.7 271.3 L671.7 271.4 L673.6 271.4 L673.6 271.4 L675.6 271.4 L675.6 271.2 L678.7 271.2 L678.7 271.7 L680.9 271.7 L680.9 271.3 L684.6 271.3 L684.6 271.9 L688.1 271.9 L688.1 271.5 L692.8 271.5 L692.8 271.3 L697.2 271.3 L697.2 271.9 L699.4 271.9 L699.4 274.2 L702.1 274.2 L702.1 277.7 L704.5 277.7 L704.5 278.2 L708.2 278.2 L708.2 275.6 L711.7 275.6 L711.7 271.2 L713.6 271.2 L713.6 270.3 L717.5 270.3 L717.5 270.4 L720.2 270.4 L720.2 271.0 L723.4 271.0 L723.4 273.2 L727.6 273.2 L727.6 276.6 L730.1 276.6 L730.1 278.4 L733.5 278.4 L733.5 281.2 L737.5 281.2 L737.5 286.9 L742.2 286.9 L742.2 289.0 L745.2 289.0 L745.2 290.8 L747.5 290.8 L747.5 291.4 L749.4 291.4 L749.4 292.2 L753.5 292.2 L753.5 293.5 L757.9 293.5 L757.9 294.8 L761.8 294.8 L761.8 295.5 L765.4 295.5 L765.4 294.9 L769.7 294.9 L769.7 294.8 L772.9 294.8 L772.9 294.7 L774.9 294.7 L774.9 294.8 L778.6 294.8 L778.6 295.1 L782.9 295.1 L782.9 294.7 L785.9 294.7 L785.9 295.1 L787.7 295.1 L787.7 295.0 L790.0 295.0 L790.0 294.8 L792.0 294.8 L792.0 295.4 L794.2 295.4 L794.2 295.1 L797.2 295.1 L797.2 296.3 L799.2 296.3 L799.2 297.5 L802.7 297.5 L802.7 298.3 L806.9 298.3 L806.9 298.3 L809.5 298.3 L809.5 297.9 L812.4 297.9 L812.4 298.3 L817.1 298.3 L817.1 297.8 L819.4 297.8 L819.4 297.9 L821.9 297.9 L821.9 298.2 L825.5 298.2 L825.5 298.1 L827.3 298.1 L827.3 298.3 L830.2 298.3 L830.2 298.6 L834.9 298.6 L834.9 300.5 L838.2 300.5 L838.2 301.7 L842.0 301.7 L842.0 300.6 L846.5 300.6 L846.5 300.3 L851.0 300.3 L851.0 299.5 L853.9 299.5 L853.9 298.5 L856.1 298.5 L856.1 298.2 L858.0 298.2 L858.0 297.4 L860.5 297.4 L860.5 296.9 L863.3 296.9 L863.3 297.6 L865.1 297.6 L865.1 298.4 L867.2 298.4 L867.2 299.4 L869.1 299.4 L869.1 300.5 L872.7 300.5 L872.7 301.4 L875.3 301.4 L875.3 302.5 L878.2 302.5 L878.2 303.5 L882.5 303.5 L882.5 305.8 L885.7 305.8 L885.7 306.4 L887.8 306.4 L887.8 306.7 L890.6 306.7 L890.6 307.6 L894.9 307.6 L894.9 308.8 L896.8 308.8 L896.8 309.9 L900.1 309.9 L900.1 310.3 L903.6 310.3 L903.6 311.1 L906.9 311.1 L906.9 312.8 L911.3 312.8 L911.3 313.8 L913.9 313.8 L913.9 314.3 L916.2 314.3 L916.2 315.0 L919.6 315.0 L919.6 315.6 L922.4 315.6 L922.4 315.7 L926.6 315.7 L926.6 317.0 L931.0 317.0 L931.0 317.3 L935.3 317.3 L935.3 317.5 L937.7 317.5 L937.7 316.1 L940.6 316.1 L940.6 314.8 L942.5 314.8 L942.5 314.6 L945.1 314.6 L945.1 314.5 L949.7 314.5 L949.7 313.6 L954.3 313.6 L954.3 313.2 L959.0 313.2 L959.0 311.5 L961.5 311.5 L961.5 310.8 L963.9 310.8 L963.9 310.1 L967.5 310.1 L967.5 309.6 L971.9 309.6 L971.9 308.2 L975.6 308.2 L975.6 308.4 L977.7 308.4 L977.7 308.3 L982.2 308.3 L982.2 308.6 L986.2 308.6 L986.2 308.9 L988.6 308.9 L988.6 309.5 L991.4 309.5 L991.4 309.9 L996.1 309.9 L996.1 310.2 L999.1 310.2 L999.1 311.6 L1003.1 311.6 L1003.1 312.7 L1005.3 312.7 L1005.3 313.4 L1009.8 313.4 L1009.8 315.5 L1012.0 315.5 L1012.0 316.4 L1016.8 316.4 L1016.8 318.0 L1019.6 318.0 L1019.6 319.0 L1021.8 319.0 L1021.8 319.6 L1026.5 319.6 L1026.5 322.2 L1029.9 322.2 L1029.9 323.7 L1033.0 323.7 L1033.0 323.9 L1037.3 323.9 L1037.3 323.8 L1039.8 323.8 L1039.8 323.2 L1042.3 323.2 L1042.3 322.8 L1044.9 322.8 L1044.9 322.0 L1047.1 322.0 L1047.1 321.9 L1050.0 321.9 L1050.0 321.3 L1053.5 321.3 L1053.5 321.6 L1056.6 321.6 L1056.6 321.6 L1059.9 321.6 L1059.9 321.2 L1063.3 321.2 L1063.3 318.1 L1066.4 318.1 L1066.4 315.8 L1068.2 315.8 L1068.2 314.7 L1070.5 314.7 L1070.5 312.2 L1074.5 312.2 L1074.5 307.3 L1077.3 307.3 L1077.3 303.8 L1080.7 303.8 L1080.7 299.6 L1082.9 299.6 L1082.9 296.8 L1085.4 296.8 L1085.4 293.6 L1089.5 293.6 L1089.5 289.2 L1093.0 289.2 L1093.0 285.5 L1097.5 285.5 L1097.5 278.7 L1101.2 278.7 L1101.2 269.8 L1104.5 269.8 L1104.5 261.6 L1107.7 261.6 L1107.7 253.6 L1110.9 253.6 L1110.9 245.7 L1114.8 245.7 L1114.8 239.2 L1119.4 239.2 L1119.4 234.4 L1122.9 234.4 L1122.9 234.1 L1127.2 234.1 L1127.2 232.7 L1129.4 232.7 L1129.4 232.6 L1131.4 232.6 L1131.4 232.2 L1133.4 232.2 L1133.4 232.2 L1137.6 232.2 L1137.6 231.8 L1139.8 231.8 L1139.8 230.7 L1143.6 230.7 L1143.6 228.4 L1148.1 228.4 L1148.1 226.8 L1150.5 226.8 L1150.5 226.3 L1153.5 226.3 L1153.5 225.4 L1158.3 225.4 L1158.3 224.7 L1160.6 224.7 L1160.6 223.7 L1163.9 223.7 L1163.9 221.1 L1166.3 221.1 L1166.3 219.8 L1170.3 219.8 L1170.3 218.3 L1173.7 218.3 L1173.7 219.1 L1175.6 219.1 L1175.6 219.5 L1179.3 219.5 L1179.3 218.4 L1181.3 218.4 L1181.3 218.1 L1185.4 218.1 L1185.4 215.2 L1187.5 215.2 L1187.5 210.5 L1189.5 210.5 L1189.5 208.9 L1192.1 208.9 L1192.1 207.0 L1195.1 207.0 L1195.1 205.8 L1199.4 205.8 L1199.4 203.0 L1201.6 203.0 L1201.6 201.5 L1205.2 201.5 L1205.2 198.3 L1207.2 198.3 L1207.2 196.1 L1211.1 196.1 L1211.1 193.0 L1213.1 193.0 L1213.1 191.7 L1216.8 191.7 L1216.8 188.4 L1218.9 188.4 L1218.9 186.9 L1220.9 186.9 L1220.9 185.4 L1224.0 185.4 L1224.0 182.7 L1227.5 182.7 L1227.5 180.1 L1230.1 180.1 L1230.1 177.0 L1233.5 177.0 L1233.5 173.7 L1235.6 173.7 L1235.6 173.5 L1237.5 173.5 L1237.5 175.6 L1240.3 175.6 L1240.3 178.8 L1244.4 178.8 L1244.4 183.3 L1247.7 183.3 L1247.7 192.5 L1250.5 192.5 L1250.5 200.5 L1253.0 200.5 L1253.0 203.4 L1257.0 203.4 L1257.0 208.2 L1259.4 208.2 L1259.4 211.1 L1264.0 211.1 L1264.0 221.9 L1268.3 221.9 L1268.3 231.2 L1271.6 231.2 L1271.6 238.1 L1274.5 238.1 L1274.5 243.8 L1278.4 243.8 L1278.4 242.4 L1281.2 242.4 L1281.2 246.3 L1285.2 246.3 L1285.2 248.0 L1288.2 248.0 L1288.2 252.2 L1290.1 252.2 L1290.1 253.2 L1292.1 253.2 L1292.1 254.8 L1294.7 254.8 L1294.7 255.9 L1296.8 255.9 L1296.8 256.6 L1301.2 256.6 L1301.2 249.8 L1303.8 249.8 L1303.8 249.9 L1306.5 249.9 L1306.5 250.9 L1308.8 250.9 L1308.8 252.1 L1311.4 252.1 L1311.4 253.7 L1316.1 253.7 L1316.1 255.8 L1318.6 255.8 L1318.6 257.4 L1321.3 257.4 L1321.3 258.0 L1323.1 258.0 L1323.1 258.2 L1326.4 258.2 L1326.4 258.4 L1328.8 258.4 L1328.8 258.6 L1330.6 258.6 L1330.6 258.5 L1332.7 258.5 L1332.7 262.0 L1334.6 262.0 L1334.6 259.9 L1337.3 259.9 L1337.3 260.6 L1340.9 260.6 L1340.9 261.6 L1344.9 261.6 L1344.9 262.6 L1348.9 262.6 L1348.9 267.1 L1351.8 267.1 L1351.8 267.3 L1356.6 267.3 L1356.6 268.0 L1360.5 268.0 L1360.5 269.1 L1362.5 269.1 L1362.5 269.6 L1367.0 269.6 L1367.0 270.3 L1371.0 270.3 L1371.0 271.2 L1373.2 271.2 L1373.2 271.4 L1376.5 271.4 L1376.5 271.3 L1380.7 271.3 L1380.7 268.1 L1384.3 268.1 L1384.3 278.6 L1388.1 278.6 L1388.1 278.4 L1390.6 278.4 L1390.6 276.6 L1392.8 276.6 L1392.8 275.9 L1394.9 275.9 L1394.9 276.7 L1398.4 276.7 L1398.4 277.2 L1402.1 277.2 L1402.1 278.0 L1405.3 278.0 L1405.3 277.0 L1409.5 277.0 L1409.5 274.0 L1412.8 274.0 L1412.8 271.0 L1416.6 271.0 L1416.6 269.7 L1420.6 269.7 L1420.6 269.1 L1422.6 269.1 L1422.6 267.2 L1426.6 267.2 L1426.6 264.3 L1430.6 264.3 L1430.6 265.6 L1433.9 265.6 L1433.9 265.7 L1437.2 265.7 L1437.2 268.2 L1441.3 268.2 L1441.3 268.5 L1445.0 268.5 L1445.0 266.3 L1447.2 266.3 L1447.2 266.1 L1451.3 266.1 L1451.3 265.6 L1454.8 265.6 L1454.8 264.9 L1456.8 264.9 L1456.8 265.0 L1460.6 265.0 L1460.6 266.9 L1464.4 266.9 L1464.4 266.7 L1467.7 266.7 L1467.7 268.9 L1470.9 268.9 L1470.9 271.7 L1475.4 271.7 L1475.4 268.9 L1480.2 268.9 L1480.2 268.9 L1482.0 268.9 L1482.0 270.1 L1486.3 270.1 L1486.3 271.3 L1489.4 271.3 L1489.4 271.2 L1491.9 271.2 L1491.9 272.0 L1494.3 272.0 L1494.3 273.3 L1496.5 273.3 L1496.5 275.5 L1501.2 275.5 L1501.2 276.4 L1505.4 276.4 L1505.4 277.2 L1509.9 277.2 L1509.9 280.1 L1512.4 280.1 L1512.4 283.4 L1515.6 283.4 L1515.6 286.0 L1517.5 286.0 L1517.5 286.7 L1520.6 286.7 L1520.6 287.2 L1522.8 287.2 L1522.8 294.1 L1525.6 294.1 L1525.6 295.5 L1527.4 295.5 L1527.4 296.1 L1531.7 296.1 L1531.7 294.9 L1536.3 294.9 L1536.3 298.0 L1540.8 298.0 L1540.8 297.8 L1543.7 297.8 L1543.7 297.9 L1548.5 297.9 L1548.5 298.4 L1551.4 298.4 L1551.4 298.3 L1554.0 298.3 L1554.0 297.0 L1556.1 297.0 L1556.1 296.8 L1558.8 296.8 L1558.8 295.9 L1561.3 295.9 L1561.3 294.5 L1564.6 294.5 L1564.6 294.4 L1567.6 294.4 L1567.6 294.9 L1572.0 294.9 L1572.0 287.0 L1575.7 287.0 L1575.7 285.6 L1580.3 285.6 L1580.3 284.2 L1584.3 284.2 L1584.3 281.1 L1588.3 281.1 L1588.3 281.8 L1592.3 281.8 L1592.3 279.9 L1595.0 279.9 L1595.0 278.1 L1599.6 278.1 L1599.6 273.3 L1602.8 273.3 L1602.8 271.9 L1605.5 271.9 L1605.5 273.9 L1610.2 273.9 L1610.2 275.3 L1614.0 275.3 L1614.0 275.3 L1617.5 275.3 L1617.5 277.4 L1619.8 277.4 L1619.8 277.1 L1622.2 277.1 L1622.2 277.4 L1625.5 277.4 L1625.5 277.6 L1630.0 277.6 L1630.0 280.6 L1633.1 280.6 L1633.1 281.8 L1635.5 281.8 L1635.5 283.0 L1638.4 283.0 L1638.4 284.2 L1640.9 284.2 L1640.9 284.8 L1644.4 284.8 L1644.4 286.1 L1648.4 286.1 L1648.4 287.8 L1651.5 287.8 L1651.5 288.5 L1654.4 288.5 L1654.4 288.0 L1656.4 288.0 L1656.4 282.4 L1661.1 282.4 L1661.1 280.4 L1664.4 280.4 L1664.4 278.1 L1668.8 278.1 L1668.8 272.0 L1671.4 272.0 L1671.4 268.3 L1674.4 268.3 L1674.4 265.3 L1679.1 265.3 L1679.1 262.8 L1683.5 262.8 L1683.5 259.7 L1685.4 259.7 L1685.4 259.1 L1689.9 259.1 L1689.9 256.5 L1693.4 256.5 L1693.4 254.2 L1696.4 254.2 L1696.4 253.2 L1700.7 253.2 L1700.7 249.0 L1705.4 249.0 L1705.4 243.2 L1707.5 243.2 L1707.5 240.7 L1710.9 240.7 L1710.9 237.7 L1715.5 237.7 L1715.5 233.7 L1719.3 233.7 L1719.3 230.6 L1722.4 230.6 L1722.4 228.8 L1724.3 228.8 L1724.3 228.5 L1726.8 228.5 L1726.8 228.0 L1730.6 228.0 L1730.6 226.6 L1732.8 226.6 L1732.8 225.8 L1736.5 225.8 L1736.5 224.9 L1738.6 224.9 L1738.6 222.5 L1742.0 222.5 L1742.0 219.9 L1744.9 219.9 L1744.9 219.0 L1748.5 219.0 L1748.5 218.1 L1751.3 218.1 L1751.3 217.8 L1755.9 217.8 L1755.9 217.6 L1760.4 217.6 L1760.4 217.3 L1762.9 217.3 L1762.9 214.9 L1767.6 214.9 L1767.6 210.9 L1770.3 210.9 L1770.3 210.9 L1773.6 210.9 L1773.6 212.0 L1776.6 212.0 L1776.6 211.0 L1780.4 211.0 L1780.4 210.3 L1782.9 210.3 L1782.9 208.7 L1785.7 208.7 L1785.7 207.9 L1787.5 207.9 L1787.5 207.0" stroke="#cc0000" stroke-width="1.6" fill="none" stroke-linejoin="round"/>
<path d="M869 421 H885" stroke="#cc0000" stroke-width="2"/>
<path d="M1105 421 H1121" stroke="#666" stroke-width="2"/>
<path d="M1348 421 H1364" stroke="#c8c8c8" stroke-width="2"/>
</svg>
<div id="c_yl0" class="t" style="left:625.2px;top:89.3px;font-size:11px;color:#666;font-weight:400;transform:scaleX(1.1111);">200</div>
<div id="c_yl1" class="t" style="left:625.2px;top:157.3px;font-size:11px;color:#666;font-weight:400;transform:scaleX(1.1111);">160</div>
<div id="c_yl2" class="t" style="left:625.2px;top:225.3px;font-size:11px;color:#666;font-weight:400;transform:scaleX(1.1111);">120</div>
<div id="c_yl3" class="t" style="left:631.8px;top:293.3px;font-size:11px;color:#666;font-weight:400;transform:scaleX(1.1167);">80</div>
<div id="c_yl4" class="t" style="left:631.8px;top:361.3px;font-size:11px;color:#666;font-weight:400;transform:scaleX(1.1167);">40</div>
<div id="c_yr0" class="t" style="left:1803.4px;top:89.3px;font-size:11px;color:#666;font-weight:400;transform:scaleX(1.1111);">200</div>
<div id="c_yr1" class="t" style="left:1803.4px;top:157.3px;font-size:11px;color:#666;font-weight:400;transform:scaleX(1.1111);">150</div>
<div id="c_yr2" class="t" style="left:1803.4px;top:225.3px;font-size:11px;color:#666;font-weight:400;transform:scaleX(1.1111);">100</div>
<div id="c_yr3" class="t" style="left:1803.4px;top:293.3px;font-size:11px;color:#666;font-weight:400;transform:scaleX(1.1250);">50</div>
<div id="c_yr4" class="t" style="left:1803.4px;top:361.3px;font-size:11px;color:#666;font-weight:400;transform:scaleX(1.2500);">0</div>
<div id="c_x0" class="t" style="left:644.0px;top:376.5px;font-size:13.5px;color:#111;font-weight:400;transform:scaleX(1.0667);">1992</div>
<div id="c_x1" class="t" style="left:712.6px;top:376.5px;font-size:13.5px;color:#111;font-weight:400;transform:scaleX(1.0667);">1994</div>
<div id="c_x2" class="t" style="left:781.1px;top:376.5px;font-size:13.5px;color:#111;font-weight:400;transform:scaleX(1.0667);">1996</div>
<div id="c_x3" class="t" style="left:849.7px;top:376.5px;font-size:13.5px;color:#111;font-weight:400;transform:scaleX(1.0667);">1998</div>
<div id="c_x4" class="t" style="left:918.2px;top:376.5px;font-size:13.5px;color:#111;font-weight:400;transform:scaleX(1.0667);">2000</div>
<div id="c_x5" class="t" style="left:986.8px;top:376.5px;font-size:13.5px;color:#111;font-weight:400;transform:scaleX(1.0667);">2002</div>
<div id="c_x6" class="t" style="left:1055.4px;top:376.5px;font-size:13.5px;color:#111;font-weight:400;transform:scaleX(1.0667);">2004</div>
<div id="c_x7" class="t" style="left:1123.9px;top:376.5px;font-size:13.5px;color:#111;font-weight:400;transform:scaleX(1.0667);">2006</div>
<div id="c_x8" class="t" style="left:1192.5px;top:376.5px;font-size:13.5px;color:#111;font-weight:400;transform:scaleX(1.0667);">2008</div>
<div id="c_x9" class="t" style="left:1261.1px;top:376.5px;font-size:13.5px;color:#111;font-weight:400;transform:scaleX(1.0667);">2010</div>
<div id="c_x10" class="t" style="left:1329.6px;top:376.5px;font-size:13.5px;color:#111;font-weight:400;transform:scaleX(1.0667);">2012</div>
<div id="c_x11" class="t" style="left:1398.2px;top:376.5px;font-size:13.5px;color:#111;font-weight:400;transform:scaleX(1.0667);">2014</div>
<div id="c_x12" class="t" style="left:1466.8px;top:376.5px;font-size:13.5px;color:#111;font-weight:400;transform:scaleX(1.0667);">2016</div>
<div id="c_x13" class="t" style="left:1535.3px;top:376.5px;font-size:13.5px;color:#111;font-weight:400;transform:scaleX(1.0667);">2018</div>
<div id="c_x14" class="t" style="left:1603.9px;top:376.5px;font-size:13.5px;color:#111;font-weight:400;transform:scaleX(1.0667);">2020</div>
<div id="c_x15" class="t" style="left:1672.4px;top:376.5px;font-size:13.5px;color:#111;font-weight:400;transform:scaleX(1.0667);">2022</div>
<div id="c_x16" class="t" style="left:1741.0px;top:376.5px;font-size:13.5px;color:#111;font-weight:400;transform:scaleX(1.0667);">2024</div>
<div class="t" style="left:611px;top:230.5px;font-size:12px;color:#666;transform:translate(-50%,-50%) rotate(-90deg);transform-origin:center;line-height:1">(USD Mil)</div>
<div class="t" style="left:1837px;top:230.5px;font-size:12px;color:#666;transform:translate(-50%,-50%) rotate(90deg);transform-origin:center;line-height:1">(USD Mil)</div>
<div id="c_l1" class="t" style="left:890.0px;top:413.8px;font-size:14px;color:#cc0000;font-weight:400;transform:scaleX(0.9780);">VLCC<span style="margin:0 0.12em">|</span>VV Values<span style="margin:0 0.12em">|</span>NB (USD Mil)</div>
<div id="c_l2" class="t" style="left:1126.2px;top:413.8px;font-size:14px;color:#cc0000;font-weight:400;transform:scaleX(0.9716);">VLCC<span style="margin:0 0.12em">|</span>VV Values<span style="margin:0 0.12em">|</span>5YO (USD Mil)</div>
<div id="c_l3" class="t" style="left:1369.1px;top:413.8px;font-size:14px;color:#cc0000;font-weight:400;transform:scaleX(0.9736);">VLCC<span style="margin:0 0.12em">|</span>VV Values<span style="margin:0 0.12em">|</span>10YO (USD Mil)</div>
<div id="c_cr" class="t" style="left:1795.0px;top:435.0px;font-size:9.5px;color:#333;font-weight:400;transform:scaleX(0.9839);">VesselsValue</div>
<div class="r" style="left:569px;top:478px;width:1310px;height:383px;background:#fff;border-radius:4px;box-shadow:0 1px 4px rgba(0,0,0,.12);overflow:hidden"></div>
<div class="r" style="left:569px;top:478px;width:176px;height:54px;background:#f5f5f5"></div>
<div class="r" style="left:741px;top:478px;width:4px;height:54px;background:#cc0000"></div>
<div class="r" style="left:569px;top:584px;width:176px;height:1px;background:#e6e6e6"></div>
<div class="r" style="left:745px;top:478px;width:1px;height:383px;background:#eee"></div>
<div id="b_sel" class="t" style="left:585.3px;top:496.9px;font-size:14.5px;color:#333;font-weight:400;-webkit-text-stroke:0.5px currentColor;transform:scaleX(0.9819);">Selected timeseries</div>
<div id="b_dis" class="t" style="left:585.3px;top:550.5px;font-size:14.5px;color:#333;font-weight:400;transform:scaleX(1.0265);">Display options</div>
<div class="r" style="left:746px;top:584px;width:1133px;height:2px;background:#eee"></div>
<div id="b_bc0" class="t" style="left:771.5px;top:503.9px;font-size:12.6px;color:#999;font-weight:400;transform:scaleX(0.9840);">Cargo / Tanker / VLCC / Matrix Values /</div>
<div id="b_bb0" class="t" style="left:989.6px;top:503.9px;font-size:12.6px;color:#000;font-weight:700;transform:scaleX(0.9476);">VLCC<span style="margin:0 0.12em">|</span>VV Values<span style="margin:0 0.12em">|</span>NB</div>
<div class="r" style="left:771px;top:528px;width:51px;height:40px;background:#fff;border:1px solid #ddd;border-radius:4px;box-sizing:border-box"></div>
<div class="r" style="left:780px;top:538px;width:20px;height:20px;background:#cc0000;border-radius:3px"></div>
<svg class="r" style="left:805px;top:544px" width="11" height="8"><path d="M1.5 1.5 L5.5 5.5 L9.5 1.5" stroke="#999" stroke-width="1.6" fill="none"/></svg>
<div class="r" style="left:830px;top:528px;width:126px;height:40px;background:#f5f5f5;border:1px solid #ccc;border-radius:4px;box-sizing:border-box"></div>
<div id="b_ax0" class="t" style="left:838.6px;top:541.1px;font-size:14.5px;color:#333;font-weight:400;transform:scaleX(0.9808);">Y-Axis: Left</div>
<svg class="r" style="left:934px;top:544px" width="13" height="9"><path d="M1.5 1.5 L6.5 6.5 L11.5 1.5" stroke="#444" stroke-width="1.8" fill="none"/></svg>
<div class="r" style="left:960px;top:522px;width:476px;height:52px;border:5px solid #1d9bf0;border-radius:9px;box-sizing:border-box"></div>
<div class="r" style="left:964px;top:528px;width:469px;height:40px;background:#f5f5f5;border:1px solid #ccc;border-radius:4px;box-sizing:border-box"></div>
<div id="b_in0" class="t" style="left:972.9px;top:541.0px;font-size:14.5px;color:#333;font-weight:400;transform:scaleX(0.9407);">VLCC<span style="margin:0 0.12em">|</span>VV Values<span style="margin:0 0.12em">|</span>NB</div>
<div id="b_ap0" class="t" style="left:1301.0px;top:541.0px;font-size:14.5px;color:#333;font-weight:400;transform:scaleX(1.0294);">Append units</div>
<div class="r" style="left:1396px;top:538px;width:20px;height:20px;background:#fff;border:1.4px solid #8f8f8f;border-radius:4px;box-sizing:border-box"></div>
<svg class="r" style="left:1396px;top:538px" width="20" height="20"><path d="M5.6 10 L8.7 13.1 L14.4 7" stroke="#cc0000" stroke-width="2.8" fill="none" stroke-linecap="round" stroke-linejoin="round"/></svg>
<div id="b_rm0" class="t" style="left:1718.6px;top:525.2px;font-size:14.5px;color:#333;font-weight:400;transform:scaleX(0.9818);">Remove data set</div>
<svg class="r" style="left:1833px;top:520px" width="22" height="23" viewBox="0 0 22 23"><path d="M1.6 5.3 H19.4" stroke="#cc0000" stroke-width="2" stroke-linecap="round"/><path d="M6.3 5.3 L7.6 2.6 Q7.9 1.9 8.6 1.9 H12.3 Q13 1.9 13.3 2.6 L14.6 5.3" stroke="#cc0000" stroke-width="2" fill="none"/><path d="M4 5.3 V18.3 Q4 20.3 6 20.3 H14.7 Q16.7 20.3 16.7 18.3 V5.3" stroke="#cc0000" stroke-width="2" fill="none"/><path d="M8 8.6 V17.4 M12.8 8.6 V17.4" stroke="#cc0000" stroke-width="2" stroke-linecap="round"/></svg>
<div class="r" style="left:746px;top:690px;width:1133px;height:2px;background:#eee"></div>
<div id="b_bc1" class="t" style="left:771.5px;top:609.9px;font-size:12.6px;color:#999;font-weight:400;transform:scaleX(0.9840);">Cargo / Tanker / VLCC / Matrix Values /</div>
<div id="b_bb1" class="t" style="left:989.6px;top:609.9px;font-size:12.6px;color:#000;font-weight:700;transform:scaleX(0.9429);">VLCC<span style="margin:0 0.12em">|</span>VV Values<span style="margin:0 0.12em">|</span>5YO</div>
<div class="r" style="left:771px;top:634px;width:51px;height:40px;background:#fff;border:1px solid #ddd;border-radius:4px;box-sizing:border-box"></div>
<div class="r" style="left:780px;top:644px;width:20px;height:20px;background:#666;border-radius:3px"></div>
<svg class="r" style="left:805px;top:650px" width="11" height="8"><path d="M1.5 1.5 L5.5 5.5 L9.5 1.5" stroke="#999" stroke-width="1.6" fill="none"/></svg>
<div class="r" style="left:830px;top:634px;width:126px;height:40px;background:#f5f5f5;border:1px solid #ccc;border-radius:4px;box-sizing:border-box"></div>
<div id="b_ax1" class="t" style="left:838.6px;top:647.1px;font-size:14.5px;color:#333;font-weight:400;transform:scaleX(0.9808);">Y-Axis: Left</div>
<svg class="r" style="left:934px;top:650px" width="13" height="9"><path d="M1.5 1.5 L6.5 6.5 L11.5 1.5" stroke="#444" stroke-width="1.8" fill="none"/></svg>
<div class="r" style="left:964px;top:634px;width:469px;height:40px;background:#f5f5f5;border:1px solid #ccc;border-radius:4px;box-sizing:border-box"></div>
<div id="b_in1" class="t" style="left:972.9px;top:647.0px;font-size:14.5px;color:#333;font-weight:400;transform:scaleX(0.9268);">VLCC<span style="margin:0 0.12em">|</span>VV Values<span style="margin:0 0.12em">|</span>5YO</div>
<div id="b_ap1" class="t" style="left:1301.0px;top:647.0px;font-size:14.5px;color:#333;font-weight:400;transform:scaleX(1.0294);">Append units</div>
<div class="r" style="left:1396px;top:644px;width:20px;height:20px;background:#fff;border:1.4px solid #8f8f8f;border-radius:4px;box-sizing:border-box"></div>
<svg class="r" style="left:1396px;top:644px" width="20" height="20"><path d="M5.6 10 L8.7 13.1 L14.4 7" stroke="#cc0000" stroke-width="2.8" fill="none" stroke-linecap="round" stroke-linejoin="round"/></svg>
<div id="b_rm1" class="t" style="left:1718.6px;top:631.2px;font-size:14.5px;color:#333;font-weight:400;transform:scaleX(0.9818);">Remove data set</div>
<svg class="r" style="left:1833px;top:626px" width="22" height="23" viewBox="0 0 22 23"><path d="M1.6 5.3 H19.4" stroke="#cc0000" stroke-width="2" stroke-linecap="round"/><path d="M6.3 5.3 L7.6 2.6 Q7.9 1.9 8.6 1.9 H12.3 Q13 1.9 13.3 2.6 L14.6 5.3" stroke="#cc0000" stroke-width="2" fill="none"/><path d="M4 5.3 V18.3 Q4 20.3 6 20.3 H14.7 Q16.7 20.3 16.7 18.3 V5.3" stroke="#cc0000" stroke-width="2" fill="none"/><path d="M8 8.6 V17.4 M12.8 8.6 V17.4" stroke="#cc0000" stroke-width="2" stroke-linecap="round"/></svg>
<div class="r" style="left:746px;top:796px;width:1133px;height:2px;background:#eee"></div>
<div id="b_bc2" class="t" style="left:771.5px;top:715.9px;font-size:12.6px;color:#999;font-weight:400;transform:scaleX(0.9840);">Cargo / Tanker / VLCC / Matrix Values /</div>
<div id="b_bb2" class="t" style="left:989.6px;top:715.9px;font-size:12.6px;color:#000;font-weight:700;transform:scaleX(0.9457);">VLCC<span style="margin:0 0.12em">|</span>VV Values<span style="margin:0 0.12em">|</span>10YO</div>
<div class="r" style="left:771px;top:740px;width:51px;height:40px;background:#fff;border:1px solid #ddd;border-radius:4px;box-sizing:border-box"></div>
<div class="r" style="left:780px;top:750px;width:20px;height:20px;background:#c8c8c8;border-radius:3px"></div>
<svg class="r" style="left:805px;top:756px" width="11" height="8"><path d="M1.5 1.5 L5.5 5.5 L9.5 1.5" stroke="#999" stroke-width="1.6" fill="none"/></svg>
<div class="r" style="left:830px;top:740px;width:126px;height:40px;background:#f5f5f5;border:1px solid #ccc;border-radius:4px;box-sizing:border-box"></div>
<div id="b_ax2" class="t" style="left:838.6px;top:753.1px;font-size:14.5px;color:#333;font-weight:400;transform:scaleX(0.9768);">Y-Axis: Right</div>
<svg class="r" style="left:934px;top:756px" width="13" height="9"><path d="M1.5 1.5 L6.5 6.5 L11.5 1.5" stroke="#444" stroke-width="1.8" fill="none"/></svg>
<div class="r" style="left:964px;top:740px;width:469px;height:40px;background:#f5f5f5;border:1px solid #ccc;border-radius:4px;box-sizing:border-box"></div>
<div id="b_in2" class="t" style="left:972.9px;top:753.0px;font-size:14.5px;color:#333;font-weight:400;transform:scaleX(0.9354);">VLCC<span style="margin:0 0.12em">|</span>VV Values<span style="margin:0 0.12em">|</span>10YO</div>
<div id="b_ap2" class="t" style="left:1301.0px;top:753.0px;font-size:14.5px;color:#333;font-weight:400;transform:scaleX(1.0294);">Append units</div>
<div class="r" style="left:1396px;top:750px;width:20px;height:20px;background:#fff;border:1.4px solid #8f8f8f;border-radius:4px;box-sizing:border-box"></div>
<svg class="r" style="left:1396px;top:750px" width="20" height="20"><path d="M5.6 10 L8.7 13.1 L14.4 7" stroke="#cc0000" stroke-width="2.8" fill="none" stroke-linecap="round" stroke-linejoin="round"/></svg>
<div id="b_rm2" class="t" style="left:1718.6px;top:737.2px;font-size:14.5px;color:#333;font-weight:400;transform:scaleX(0.9818);">Remove data set</div>
<svg class="r" style="left:1833px;top:732px" width="22" height="23" viewBox="0 0 22 23"><path d="M1.6 5.3 H19.4" stroke="#cc0000" stroke-width="2" stroke-linecap="round"/><path d="M6.3 5.3 L7.6 2.6 Q7.9 1.9 8.6 1.9 H12.3 Q13 1.9 13.3 2.6 L14.6 5.3" stroke="#cc0000" stroke-width="2" fill="none"/><path d="M4 5.3 V18.3 Q4 20.3 6 20.3 H14.7 Q16.7 20.3 16.7 18.3 V5.3" stroke="#cc0000" stroke-width="2" fill="none"/><path d="M8 8.6 V17.4 M12.8 8.6 V17.4" stroke="#cc0000" stroke-width="2" stroke-linecap="round"/></svg>
<div class="r" style="left:746px;top:796px;width:1133px;height:2px;background:#eee"></div>
<div class="r" style="left:0px;top:0px;width:1920px;height:72px;background:#cc0000;box-shadow:0 3px 18px rgba(0,0,0,.18);z-index:5"></div>
<svg class="r" style="left:22px;top:15.3px;z-index:6" width="37" height="37" viewBox="0 0 37 37"><circle cx="18.5" cy="18.5" r="17.7" fill="#fff"/><path d="M16.1 5.3 L31.2 22.4 L9.1 27.6Z" fill="#cc0000" stroke="#cc0000" stroke-width="1.6" stroke-linejoin="round"/></svg>
<div id="h_vv" class="t" style="left:69.2px;top:22.4px;font-size:24.3px;color:#fff;font-weight:700;transform:scaleX(0.9052);z-index:6">VesselsValue</div>
<div id="h_vn" class="t" style="left:133.3px;top:46.0px;font-size:11.6px;color:#fff;font-weight:400;transform:scaleX(0.9571);z-index:6">Veson Nautical</div>
<div class="r" style="left:281px;top:18px;width:512px;height:36px;background:#fff;border-radius:4px;z-index:6"></div>
<svg class="r" style="left:288px;top:29px;z-index:6" width="14" height="14" viewBox="0 0 14 14"><circle cx="6" cy="6" r="4" stroke="#444" stroke-width="1.7" fill="none"/><path d="M8.9 8.9 L12 12" stroke="#444" stroke-width="2.2" stroke-linecap="round"/></svg>
<div id="h_sp" class="t" style="left:310.0px;top:28.9px;font-size:14px;color:#666;font-weight:400;transform:scaleX(1.0339);z-index:6">Search by: name, IMO, company, yard, port, etc.</div>
<div id="h_n1" class="t" style="left:1331.0px;top:28.5px;font-size:14.5px;color:#fff;font-weight:400;z-index:6">Value</div>
<svg class="r" style="left:1374px;top:33px;z-index:6" width="11" height="8"><path d="M1.5 1.5 L5.5 5.5 L9.5 1.5" stroke="#fff" stroke-width="1.7" fill="none"/></svg>
<div id="h_n2" class="t" style="left:1417.0px;top:28.5px;font-size:14.5px;color:#fff;font-weight:400;transform:scaleX(0.9839);z-index:6">Database</div>
<svg class="r" style="left:1485px;top:33px;z-index:6" width="11" height="8"><path d="M1.5 1.5 L5.5 5.5 L9.5 1.5" stroke="#fff" stroke-width="1.7" fill="none"/></svg>
<div id="h_n3" class="t" style="left:1527.5px;top:28.5px;font-size:14.5px;color:#fff;font-weight:400;transform:scaleX(1.0286);z-index:6">Map</div>
<svg class="r" style="left:1563px;top:33px;z-index:6" width="11" height="8"><path d="M1.5 1.5 L5.5 5.5 L9.5 1.5" stroke="#fff" stroke-width="1.7" fill="none"/></svg>
<div id="h_n4" class="t" style="left:1605.0px;top:28.5px;font-size:14.5px;color:#fff;font-weight:400;transform:scaleX(1.0270);z-index:6">Trade</div>
<svg class="r" style="left:1650px;top:33px;z-index:6" width="11" height="8"><path d="M1.5 1.5 L5.5 5.5 L9.5 1.5" stroke="#fff" stroke-width="1.7" fill="none"/></svg>
<div id="h_n5" class="t" style="left:1692.0px;top:28.5px;font-size:14.5px;color:#fff;font-weight:400;transform:scaleX(1.0270);z-index:6">Alerts</div>
<svg class="r" style="left:1737.3px;top:33px;z-index:6" width="11" height="8"><path d="M1.5 1.5 L5.5 5.5 L9.5 1.5" stroke="#fff" stroke-width="1.7" fill="none"/></svg>
<div id="h_n6" class="t" style="left:1779.3px;top:28.5px;font-size:14.5px;color:#fff;font-weight:400;transform:scaleX(0.9961);z-index:6">Reports</div>
<svg class="r" style="left:1870px;top:28px;z-index:6" width="28" height="16" viewBox="0 0 28 16"><circle cx="7.2" cy="4.9" r="3.7" fill="#fff"/><path d="M1.3 13.6 Q1.3 9.4 5.2 9.4 H9.2 Q13.1 9.4 13.1 13.6 Q13.1 15 11.8 15 H2.6 Q1.3 15 1.3 13.6Z" fill="#fff"/><path d="M17.5 7.3 L21.5 11.3 L25.5 7.3" stroke="#fff" stroke-width="1.7" fill="none"/></svg>
</body></html>
